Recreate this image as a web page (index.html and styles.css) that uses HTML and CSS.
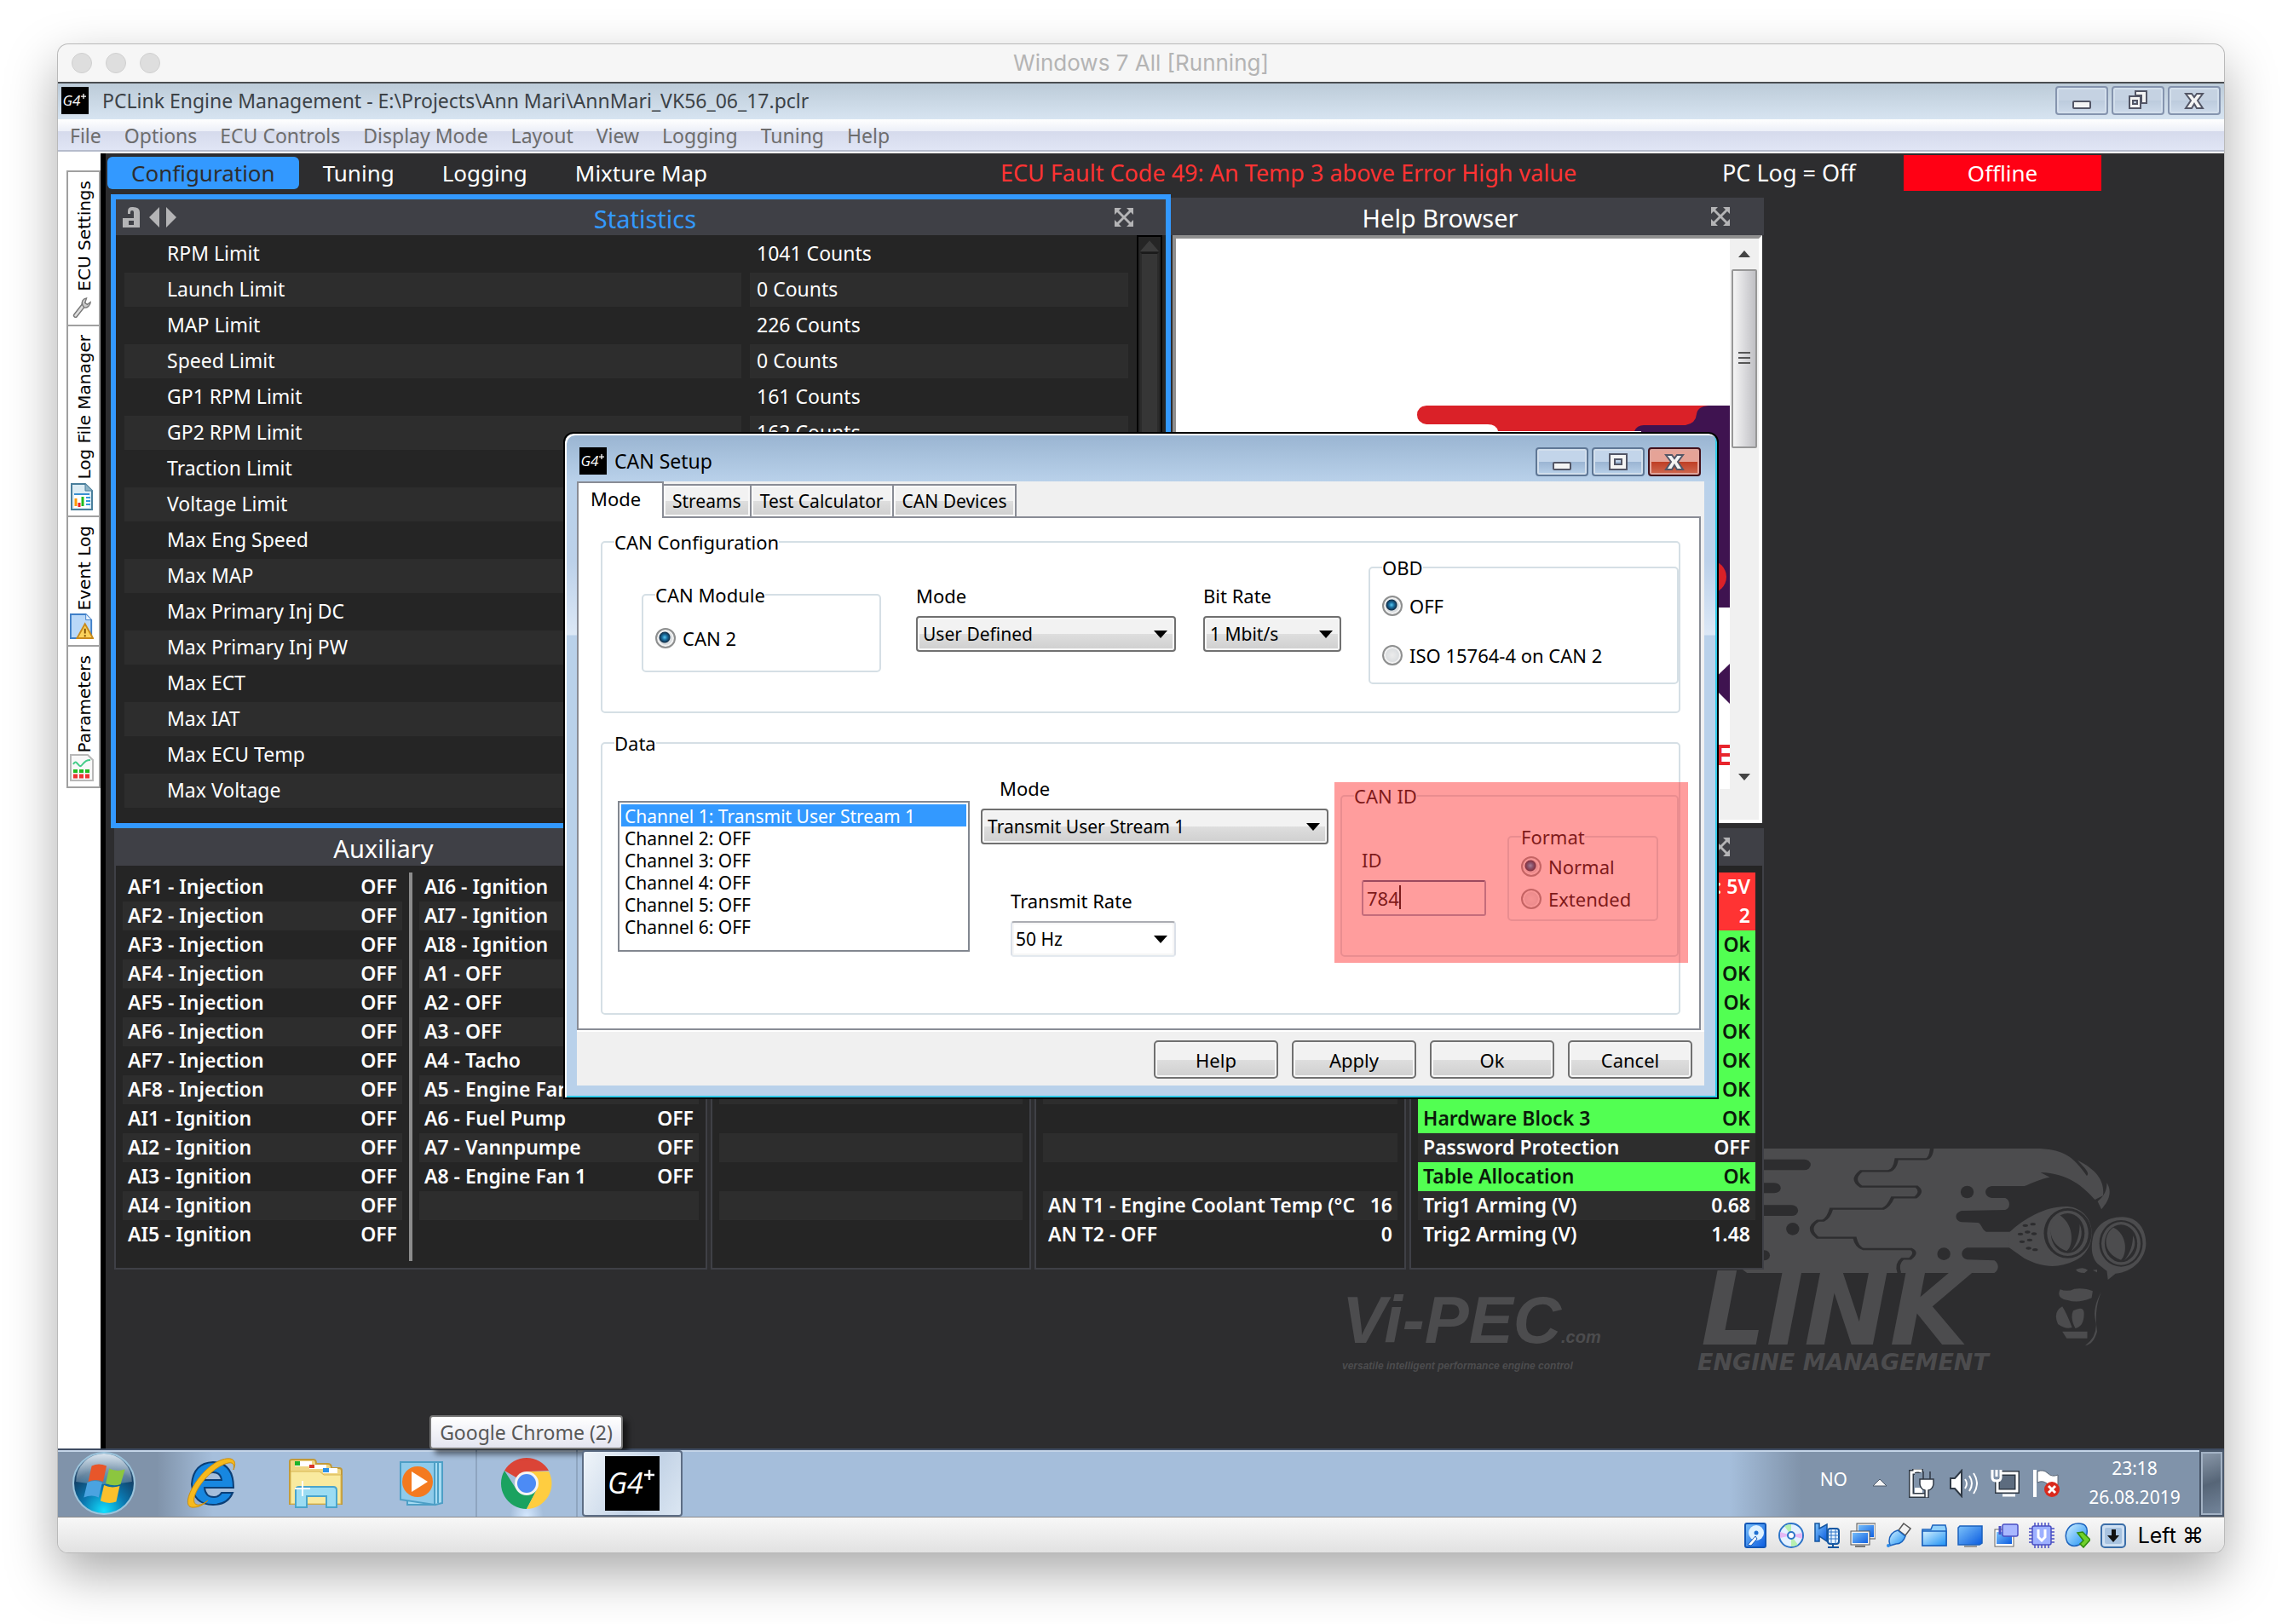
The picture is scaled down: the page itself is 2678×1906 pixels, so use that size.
FILE: index.html
```html
<!DOCTYPE html>
<html lang="en">
<head>
<meta charset="utf-8">
<title>Windows 7 All [Running]</title>
<link rel="stylesheet" href="styles.css">
</head>
<body>
<svg width="0" height="0" class="defs" aria-hidden="true">
  <defs>
    <symbol id="g4" viewBox="0 0 64 64"><rect width="64" height="64" fill="#000"/><text x="3" y="44" font-family="Open Sans, sans-serif" font-style="italic" font-size="34" fill="#fff">G4</text><path d="M52 16v12M46 22h12" stroke="#fff" stroke-width="2.5"/></symbol>
    <symbol id="expand" viewBox="0 0 22 22"><path d="M0 0h8l-3 3 6 6 6-6-3-3h8v8l-3-3-6 6 6 6 3-3v8h-8l3-3-6-6-6 6 3 3H0v-8l3 3 6-6-6-6-3 3z" fill="#b4b4b6"/></symbol>
    <symbol id="w-min" viewBox="0 0 24 24"><rect x="2" y="13" width="20" height="8" rx="1" fill="#f4f4f4" stroke="#535666" stroke-width="2"/></symbol>
    <symbol id="w-max" viewBox="0 0 24 24"><path d="M2 3h20v18H2zM8 9v6h8V9z" fill="#f4f4f4" fill-rule="evenodd" stroke="#535666" stroke-width="2"/></symbol>
    <symbol id="w-restore" viewBox="0 0 24 24"><path d="M9 1h13v14h-6V6H9z" fill="#f4f4f4" stroke="#535666" stroke-width="2"/><path d="M2 7h13v14H2zM6 12v4h5v-4z" fill="#f4f4f4" fill-rule="evenodd" stroke="#535666" stroke-width="2"/></symbol>
    <symbol id="w-close" viewBox="0 0 24 24"><path d="M2 4h7l3 4 3-4h7l-6 8 6 9h-7l-3-5-3 5H2l6-9z" fill="#f4f4f4" stroke="#535666" stroke-width="2"/></symbol>
    <linearGradient id="blue" x1="0" y1="0" x2="1" y2="1"><stop offset="0" stop-color="#d4f1ff"/><stop offset="1" stop-color="#1a8ff4"/></linearGradient>
    <linearGradient id="deep" x1="0" y1="0" x2="1" y2="1"><stop offset="0" stop-color="#7cc2fa"/><stop offset="1" stop-color="#0a5be0"/></linearGradient>
  </defs>
</svg>

<main class="window">
  <header class="mac-bar">
    <span class="dots"><i></i><i></i><i></i></span>
    <h1>Windows 7 All [Running]</h1>
  </header>

  <div class="title-bar">
    <svg class="app-icon"><use href="#g4"/></svg>
    <span class="title-text">PCLink Engine Management - E:\Projects\Ann Mari\AnnMari_VK56_06_17.pclr</span>
    <span class="win-buttons">
      <button type="button" aria-label="Minimize"><svg><use href="#w-min"/></svg></button>
      <button type="button" aria-label="Restore"><svg><use href="#w-restore"/></svg></button>
      <button type="button" aria-label="Close"><svg><use href="#w-close"/></svg></button>
    </span>
  </div>

  <nav class="menu">
    <button type="button">File</button><button type="button">Options</button><button type="button">ECU Controls</button><button type="button">Display Mode</button><button type="button">Layout</button><button type="button">View</button><button type="button">Logging</button><button type="button">Tuning</button><button type="button">Help</button>
  </nav>

  <div class="app">
    <aside class="side">
      <button type="button" class="side-tab t1">
        <span>ECU Settings</span>
        <svg viewBox="0 0 24 26"><path d="M4 23L15 9" stroke="#777" stroke-width="6" stroke-linecap="round"/><path d="M4 23L15 9" stroke="#ddd" stroke-width="3" stroke-linecap="round"/><path d="M13 10c-2-4 0-8 5-9l-2 6 3 2 4-3c0 4-4 8-8 7z" fill="#ccc" stroke="#777" stroke-width="1.5"/></svg>
      </button>
      <button type="button" class="side-tab t2">
        <span>Log File Manager</span>
        <svg viewBox="0 0 26 32"><path d="M1 1h16l8 8v22H1z" fill="#dcecf4" stroke="#4a7f9c" stroke-width="2"/><path d="M17 1v8h8" fill="#8db4c8" stroke="#4a7f9c"/><path d="M4 12h18v17H4z" fill="#fff"/><path d="M4 13h18" stroke="#3a8fd0" stroke-width="2"/><path d="M6 18v9" stroke="#f90" stroke-width="3"/><path d="M10 23v5" stroke="#e22" stroke-width="3"/><path d="M14 16v11" stroke="#2b2" stroke-width="3"/><path d="M18 17h5M18 21h5M18 25h5" stroke="#39d" stroke-width="2"/></svg>
      </button>
      <button type="button" class="side-tab t3">
        <span>Event Log</span>
        <svg viewBox="0 0 30 32"><path d="M1 1h19l7 7v23H1z" fill="#b9d8f8" stroke="#3f7fc8" stroke-width="2"/><path d="M20 1v7h7" fill="#eaf4ff" stroke="#3f7fc8"/><path d="M19 13l10 18H9z" fill="#fbd35c" stroke="#c98a1c" stroke-width="2"/><path d="M19 19v6M19 27v2" stroke="#7a4a00" stroke-width="2"/></svg>
      </button>
      <button type="button" class="side-tab t4">
        <span>Parameters</span>
        <svg viewBox="0 0 28 32"><path d="M1 1h20l6 6v24H1z" fill="#f8f8f8" stroke="#b8b8b8" stroke-width="2"/><path d="M4 12c4-8 6 6 10 1s6-6 10-6" fill="none" stroke="#4c8" stroke-width="2"/><path d="M4 20h5M11 20h5M18 20h5" stroke="#2b2" stroke-width="4"/><path d="M4 26h5M11 26h5M18 26h5" stroke="#e33" stroke-width="5"/></svg>
      </button>
    </aside>

    <section class="workspace">
      <div class="top-row">
        <div class="tabs">
          <button type="button" class="on">Configuration</button><button type="button">Tuning</button><button type="button">Logging</button><button type="button">Mixture Map</button>
        </div>
        <span class="fault">ECU Fault Code 49: An Temp 3 above Error High value</span>
        <span class="pclog">PC Log = Off</span>
        <strong class="offline">Offline</strong>
      </div>

      <svg class="brand" viewBox="0 0 952 274" aria-hidden="true">
        <g fill="#4c4c4e" transform="translate(-30 -26) scale(.6378 .3333)">
          <path d="M785 84H1330C1380 84 1400 110 1425 180C1432 170 1420 150 1408 125C1445 160 1458 200 1455 250L1440 264C1420 220 1390 170 1340 168L1357 185C1340 190 1320 210 1310 216H1250C1235 222 1235 252 1250 258H1275C1285 265 1285 295 1275 300L1195 303C1180 310 1182 340 1195 343L1225 345C1232 350 1232 370 1240 377H1290V433H1205C1192 440 1192 470 1205 475L1255 478C1264 490 1264 510 1255 522H800L787 503Z"/>
          <path d="M1462 205C1470 230 1470 260 1452 298L1445 270C1458 250 1462 230 1462 205Z"/>
          <g fill="#2d2d2f">
            <rect x="800" y="122" width="117" height="38" rx="12" ry="19"/><rect x="800" y="205" width="62" height="36" rx="12" ry="18"/><rect x="800" y="283" width="94" height="38" rx="12" ry="19"/>
            <ellipse cx="1205" cy="237" rx="12" ry="22"/><ellipse cx="884" cy="367" rx="12" ry="22"/><ellipse cx="1162" cy="455" rx="12" ry="22"/><ellipse cx="832" cy="460" rx="10" ry="18"/>
          </g>
          <path d="M1140 84Q1138 121 1128 121H1075Q1072 160 1060 163H1010Q990 193 1010 218H1112Q1124 236 1110 256H1068Q1060 290 1050 296H955Q950 330 940 338H930Q908 365 930 398H998Q1002 432 1014 438H1102Q1114 450 1100 472H1086Q1074 490 1080 522" fill="none" stroke="#2d2d2f" stroke-width="7"/>
          <path d="M1283 378C1310 330 1350 285 1390 288C1445 298 1448 440 1404 478C1370 510 1340 500 1310 470L1280 430Z"/>
          <ellipse cx="1390" cy="382" rx="44" ry="88" fill="#2d2d2f"/><ellipse cx="1390" cy="382" rx="38" ry="80"/><ellipse cx="1390" cy="382" rx="31" ry="70" fill="#2d2d2f"/>
          <path d="M1372 315C1402 345 1402 425 1388 445C1352 420 1352 345 1372 315ZM1412 350C1420 385 1414 420 1396 446C1408 415 1412 385 1412 350Z"/>
          <path d="M1436 400C1440 360 1460 325 1490 325C1520 325 1534 370 1534 418C1534 470 1510 520 1478 524L1464 546L1462 515L1445 490Q1430 460 1436 400Z"/>
          <ellipse cx="1488" cy="418" rx="40" ry="82" fill="#2d2d2f"/><ellipse cx="1488" cy="418" rx="36" ry="76"/><ellipse cx="1488" cy="418" rx="30" ry="66" fill="#2d2d2f"/>
          <path d="M1474 362C1500 385 1500 455 1488 476C1452 450 1456 385 1474 362ZM1510 390C1518 420 1512 450 1494 478C1506 450 1510 420 1510 390Z"/>
          <g fill="#2d2d2f"><circle cx="1312" cy="355" r="5"/><circle cx="1326" cy="350" r="5"/><circle cx="1303" cy="385" r="5"/><circle cx="1316" cy="378" r="5"/><circle cx="1328" cy="384" r="5"/><circle cx="1306" cy="412" r="5"/><circle cx="1320" cy="406" r="5"/><circle cx="1318" cy="435" r="5"/><circle cx="1330" cy="440" r="5"/></g>
          <path d="M1405 510q14-12 22 2l-6 10q-14 0-16-12zM1436 512l8-2v10zM1376 580q14 10 26-2q20-4 34 8l-2 24q-24 20-44 8q-22-6-14-38zM1380 640q-18 20-8 62q14 20 26 12q-10-50-18-74zM1400 655q20-20 20 10q0 45-16 52q-10-36-4-62zM1380 728h46v24h-38zM1452 588q-18 60-10 110q2 50-20 80q16-6 22-50q-6-80 8-140z"/>
        </g>
        <g class="brand-text">
          <text x="5" y="230" class="vipec">Vi-PEC</text>
          <text x="262" y="230" class="dotcom">.com</text>
          <text x="5" y="261" class="tagline">versatile intelligent performance engine control</text>
          <text x="426" y="232" class="link">LINK</text>
          <text x="422" y="262" class="engine">ENGINE MANAGEMENT</text>
        </g>
      </svg>

      <div class="dash">
        <div class="row-top">
          <section class="panel stats">
            <header class="phead">
              <span class="ptools">
                <svg width="24" height="24" viewBox="0 0 24 24"><path d="M0 13h13V6q0-2-2-2t-2 2v2H6V5q0-5 5-5h1q8 0 8 6v18H0zM7 16v5h6v-5z" fill="#b4b4b6" fill-rule="evenodd"/></svg>
                <svg width="34" height="24" viewBox="0 0 34 24"><path d="M13 0v24L1 12zM21 0v24l12-12z" fill="#b4b4b6"/></svg>
              </span>
              <h2>Statistics</h2>
              <svg class="exp"><use href="#expand"/></svg>
            </header>
            <div class="stats-body">
              <table>
                <tr><th>RPM Limit</th><td>1041 Counts</td></tr>
                <tr><th>Launch Limit</th><td>0 Counts</td></tr>
                <tr><th>MAP Limit</th><td>226 Counts</td></tr>
                <tr><th>Speed Limit</th><td>0 Counts</td></tr>
                <tr><th>GP1 RPM Limit</th><td>161 Counts</td></tr>
                <tr><th>GP2 RPM Limit</th><td>162 Counts</td></tr>
                <tr><th>Traction Limit</th><td></td></tr>
                <tr><th>Voltage Limit</th><td></td></tr>
                <tr><th>Max Eng Speed</th><td></td></tr>
                <tr><th>Max MAP</th><td></td></tr>
                <tr><th>Max Primary Inj DC</th><td></td></tr>
                <tr><th>Max Primary Inj PW</th><td></td></tr>
                <tr><th>Max ECT</th><td></td></tr>
                <tr><th>Max IAT</th><td></td></tr>
                <tr><th>Max ECU Temp</th><td></td></tr>
                <tr><th>Max Voltage</th><td></td></tr>
              </table>
              <div class="dark-scroll"><i></i><b></b></div>
            </div>
          </section>

          <section class="panel help">
            <header class="phead"><h2>Help Browser</h2><svg class="exp"><use href="#expand"/></svg></header>
            <div class="help-body">
              <div class="help-page">
                <svg viewBox="0 0 650 648" preserveAspectRatio="xMaxYMin slice">
                  <path d="M294 196H650V433H600V226H378Q376 218 366 218H294Q283 216 283 207Q283 197 294 196Z" fill="#da2128"/>
                  <path d="M625 196H650V433H546V226H538Q541 219 549 219H598Q610 217 611 206Q612 197 625 196Z" fill="#3f1350"/>
                  <circle cx="627" cy="397" r="19" fill="#da2128"/>
                  <path d="M650 499V546L626 522Z" fill="#3f1350"/>
                  <text x="633" y="618" font-family="Liberation Sans, sans-serif" font-weight="bold" font-size="35" fill="#e8252c">E</text>
                </svg>
              </div>
              <div class="vscroll"><i class="up"></i><b></b><i class="down"></i></div>
              <div class="hscroll"></div>
            </div>
          </section>
        </div>

        <div class="row-bottom">
          <section class="panel aux">
            <header class="phead"><h2>Auxiliary</h2></header>
            <div class="pbody two">
              <table>
                <tr><th>AF1 - Injection</th><td>OFF</td></tr>
                <tr><th>AF2 - Injection</th><td>OFF</td></tr>
                <tr><th>AF3 - Injection</th><td>OFF</td></tr>
                <tr><th>AF4 - Injection</th><td>OFF</td></tr>
                <tr><th>AF5 - Injection</th><td>OFF</td></tr>
                <tr><th>AF6 - Injection</th><td>OFF</td></tr>
                <tr><th>AF7 - Injection</th><td>OFF</td></tr>
                <tr><th>AF8 - Injection</th><td>OFF</td></tr>
                <tr><th>AI1 - Ignition</th><td>OFF</td></tr>
                <tr><th>AI2 - Ignition</th><td>OFF</td></tr>
                <tr><th>AI3 - Ignition</th><td>OFF</td></tr>
                <tr><th>AI4 - Ignition</th><td>OFF</td></tr>
                <tr><th>AI5 - Ignition</th><td>OFF</td></tr>
              </table>
              <i class="divider"></i>
              <table>
                <tr><th>AI6 - Ignition</th><td></td></tr>
                <tr><th>AI7 - Ignition</th><td></td></tr>
                <tr><th>AI8 - Ignition</th><td></td></tr>
                <tr><th>A1 - OFF</th><td></td></tr>
                <tr><th>A2 - OFF</th><td></td></tr>
                <tr><th>A3 - OFF</th><td></td></tr>
                <tr><th>A4 - Tacho</th><td></td></tr>
                <tr><th>A5 - Engine Fan</th><td></td></tr>
                <tr><th>A6 - Fuel Pump</th><td>OFF</td></tr>
                <tr><th>A7 - Vannpumpe</th><td>OFF</td></tr>
                <tr><th>A8 - Engine Fan 1</th><td>OFF</td></tr>
                <tr><th></th><td></td></tr>
                <tr><th></th><td></td></tr>
              </table>
            </div>
          </section>

          <section class="panel">
            <header class="phead"></header>
            <div class="pbody">
              <table>
                <tr><th></th></tr><tr><th></th></tr><tr><th></th></tr><tr><th></th></tr><tr><th></th></tr><tr><th></th></tr><tr><th></th></tr>
                <tr><th></th></tr>
                <tr><th></th></tr><tr><th></th></tr><tr><th></th></tr><tr><th></th></tr><tr><th></th></tr>
              </table>
            </div>
          </section>

          <section class="panel">
            <header class="phead"></header>
            <div class="pbody">
              <table>
                <tr><th></th><td></td></tr><tr><th></th><td></td></tr><tr><th></th><td></td></tr><tr><th></th><td></td></tr><tr><th></th><td></td></tr><tr><th></th><td></td></tr><tr><th></th><td></td></tr><tr><th></th><td></td></tr><tr><th></th><td></td></tr><tr><th></th><td></td></tr><tr><th></th><td></td></tr>
                <tr><th>AN T1 - Engine Coolant Temp (°C</th><td>16</td></tr>
                <tr><th>AN T2 - OFF</th><td>0</td></tr>
              </table>
            </div>
          </section>

          <section class="panel">
            <header class="phead"><svg class="exp"><use href="#expand"/></svg></header>
            <div class="pbody">
              <table>
                <tr class="bad"><th></th><td>: 5V</td></tr>
                <tr class="bad"><th></th><td>2</td></tr>
                <tr class="good"><th></th><td>Ok</td></tr>
                <tr class="good"><th></th><td>OK</td></tr>
                <tr class="good"><th></th><td>Ok</td></tr>
                <tr class="good"><th></th><td>OK</td></tr>
                <tr class="good"><th></th><td>OK</td></tr>
                <tr class="good"><th></th><td>OK</td></tr>
                <tr class="good"><th>Hardware Block 3</th><td>OK</td></tr>
                <tr><th>Password Protection</th><td>OFF</td></tr>
                <tr class="good"><th>Table Allocation</th><td>Ok</td></tr>
                <tr><th>Trig1 Arming (V)</th><td>0.68</td></tr>
                <tr><th>Trig2 Arming (V)</th><td>1.48</td></tr>
              </table>
            </div>
          </section>
        </div>
      </div>
    </section>
  </div>

  <section class="dialog" role="dialog" aria-label="CAN Setup">
    <div class="dlg-title">
      <svg class="app-icon"><use href="#g4"/></svg>
      <span>CAN Setup</span>
      <span class="win-buttons">
        <button type="button" aria-label="Minimize"><svg><use href="#w-min"/></svg></button>
        <button type="button" aria-label="Maximize"><svg><use href="#w-max"/></svg></button>
        <button type="button" class="red" aria-label="Close"><svg><use href="#w-close"/></svg></button>
      </span>
    </div>
    <form class="client">
      <div class="dlg-tabs">
        <button type="button" class="on">Mode</button><button type="button">Streams</button><button type="button">Test Calculator</button><button type="button">CAN Devices</button>
      </div>
      <div class="page">
        <fieldset class="config">
          <legend>CAN Configuration</legend>
          <div class="config-row">
            <fieldset class="module">
              <legend>CAN Module</legend>
              <label class="opt"><input type="radio" name="module" checked>CAN 2</label>
            </fieldset>
            <div class="field mode">
              <label for="mode">Mode</label>
              <span class="combo"><select id="mode"><option>User Defined</option></select></span>
            </div>
            <div class="field rate">
              <label for="bit">Bit Rate</label>
              <span class="combo"><select id="bit"><option>1 Mbit/s</option></select></span>
            </div>
            <fieldset class="obd">
              <legend>OBD</legend>
              <label class="opt"><input type="radio" name="obd" checked>OFF</label>
              <label class="opt"><input type="radio" name="obd">ISO 15764-4 on CAN 2</label>
            </fieldset>
          </div>
        </fieldset>

        <fieldset class="data">
          <legend>Data</legend>
          <div class="data-row">
            <select class="channels" size="6" aria-label="Channels">
              <option selected>Channel 1: Transmit User Stream 1</option>
              <option>Channel 2: OFF</option>
              <option>Channel 3: OFF</option>
              <option>Channel 4: OFF</option>
              <option>Channel 5: OFF</option>
              <option>Channel 6: OFF</option>
            </select>
            <div class="transmit">
              <div class="field">
                <label for="cmode" class="in-22">Mode</label>
                <span class="combo"><select id="cmode"><option>Transmit User Stream 1</option></select></span>
              </div>
              <div class="field tx">
                <label for="tx">Transmit Rate</label>
                <span class="combo plain"><select id="tx"><option>50 Hz</option></select></span>
              </div>
            </div>
            <div class="canid-wrap">
              <fieldset class="canid">
                <legend>CAN ID</legend>
                <div class="canid-row">
                  <div class="field id">
                    <label for="cid">ID</label>
                    <span class="text"><input id="cid" type="text" value="784"></span>
                  </div>
                  <fieldset class="format">
                    <legend>Format</legend>
                    <label class="opt"><input type="radio" name="fmt" checked>Normal</label>
                    <label class="opt"><input type="radio" name="fmt">Extended</label>
                  </fieldset>
                </div>
              </fieldset>
            </div>
          </div>
        </fieldset>
      </div>
      <footer class="dlg-foot">
        <button type="button">Help</button><button type="button">Apply</button><button type="button">Ok</button><button type="button">Cancel</button>
      </footer>
    </form>
  </section>

  <footer class="taskbar">
    <button type="button" class="orb" aria-label="Start">
      <svg viewBox="0 0 72 72">
        <defs><radialGradient id="orb" cx=".5" cy=".95" r=".9"><stop offset="0" stop-color="#12e0ff"/><stop offset=".4" stop-color="#0a78b0"/><stop offset=".75" stop-color="#123f66"/><stop offset="1" stop-color="#5f7f9c"/></radialGradient><linearGradient id="gl" x1="0" y1="0" x2="0" y2="1"><stop offset="0" stop-color="#dfe9f2" stop-opacity=".95"/><stop offset="1" stop-color="#9fb6c8" stop-opacity=".35"/></linearGradient></defs>
        <circle cx="36" cy="36" r="35" fill="url(#orb)" stroke="#9cc4dc" stroke-width="2"/>
        <path d="M4 34A32 32 0 0 1 68 34Q36 40 4 34Z" fill="url(#gl)"/>
        <path d="M22 16q8-4 17 0l-4 18q-8-4-17 0z" fill="#e8562a"/><path d="M42 19q8 4 18 1l-5 17q-8 3-17-1z" fill="#8cc63f"/><path d="M17 35q8-4 17 0l-4 17q-8-4-17 0z" fill="#4aa3e0"/><path d="M36 38q8 4 18 1l-4 18q-9 3-18-1z" fill="#fbc02d"/>
      </svg>
    </button>
    <button type="button" class="task" aria-label="Internet Explorer">
      <svg width="66" height="62" viewBox="0 0 66 62"><path d="M61 36H27q1 11 11 11 6 0 9-5h13q-6 14-23 14Q14 56 12 32 14 7 37 6q24 1 24 30zM27 27h20q-1-9-10-9t-10 9z" fill="#1787e0" stroke="#0b3f77" stroke-width="2"/><path d="M15 59C-6 62 20 12 48 3c14-4 17 3 13 12 2-9-3-10-12-6C28 18 6 52 18 56c4 1 9-2 13-5-5 5-11 8-16 8z" fill="#f6b91c" stroke="#c98d10"/></svg>
    </button>
    <button type="button" class="task" aria-label="Windows Explorer">
      <svg width="66" height="60" viewBox="0 0 66 60"><path d="M3 54V4q0-2 3-2h25q3 0 3 5h14q4 0 4 5h9q3 0 3 3v39z" fill="#efd684" stroke="#c29a38" stroke-width="2"/><path d="M9 4h20v6H9z" fill="#fff"/><path d="M9 4h6v5H9z" fill="#1db32a"/><path d="M26 8h20v5H26z" fill="#fff"/><path d="M26 8h6v4h-6z" fill="#d8362a"/><path d="M42 12h17v6H42z" fill="#fff"/><path d="M42 12h7v5h-7z" fill="#2b92e8"/><path d="M4 16h34l5 4h20v34H4z" fill="#f9ea9f" stroke="#d8b653"/><path d="M10 58V38q0-4 4-4h40q4 0 4 4v20H46V45H23v13z" fill="#9bdcf3" stroke="#4aa5cc" stroke-width="2"/><path d="M18 27v18M9 36h18" stroke="#fff" stroke-width="2"/></svg>
    </button>
    <button type="button" class="task" aria-label="Media Player">
      <svg width="60" height="54" viewBox="0 0 60 54"><path d="M14 2h41v48l-8 2H14z" fill="#a7dcf3" stroke="#4d9fc6" stroke-width="2"/><path d="M6 2h40v50L6 46z" fill="#8fcbea" stroke="#4d9fc6" stroke-width="2"/><path d="M50 3v47" stroke="#4d9fc6" stroke-width="2"/><circle cx="26" cy="25" r="18" fill="#f47a1f"/><path d="M19 13v24l19-12z" fill="#fff"/></svg>
    </button>
    <button type="button" class="task chrome" aria-label="Google Chrome">
      <svg width="62" height="62" viewBox="0 0 62 62"><path d="M31 31L5 16A30 30 0 0 1 57 16L31 17z" fill="#db4437"/><path d="M31 31L43 38 31 61A30 30 0 0 1 5 16L19 38z" fill="#1aa260"/><path d="M31 17H57A30 30 0 0 1 31 61L43 38z" fill="#ffcd40"/><circle cx="31" cy="31" r="14" fill="#f4f4f4"/><circle cx="31" cy="31" r="11" fill="#4c8bf5"/></svg>
      <span class="tip">Google Chrome (2)</span>
    </button>
    <button type="button" class="task active" aria-label="PCLink"><svg width="64" height="64"><use href="#g4"/></svg></button>

    <div class="tray">
      <span class="lang">NO</span>
      <svg class="caret" width="18" height="12" viewBox="0 0 18 12"><path d="M9 1l8 8H1z" fill="#f6f6f6" stroke="#4d5a6b"/></svg>
      <svg width="32" height="34" viewBox="0 0 32 34"><path d="M7 4H3v27h18M7 4V2h7v2" fill="none" stroke="#2f3945" stroke-width="6"/><path d="M7 4H3v27h18M7 4V2h7v2" fill="none" stroke="#fff" stroke-width="3"/><path d="M7 22h9v6H7z" fill="#fff"/><path d="M17 3v9M25 3v9M13 12h16v6q-1 6-6 7v9h-4v-9q-5-1-6-7z" fill="#fff" stroke="#2f3945" stroke-width="1.5"/></svg>
      <svg width="34" height="34" viewBox="0 0 34 34"><path d="M2 11h5l8-9v30l-8-9H2z" fill="#fff" stroke="#2f3945" stroke-width="2"/><path d="M19 12q4 5 0 11M24 8q6 9 0 18M29 5q8 12 0 24" fill="none" stroke="#fff" stroke-width="2"/></svg>
      <svg width="34" height="34" viewBox="0 0 34 34"><path d="M12 5h19v21H8V15" fill="#5d6c7f" stroke="#2f3945" stroke-width="6"/><path d="M12 5h19v21H8V15M14 31h15" fill="none" stroke="#fff" stroke-width="3"/><path d="M2 1v9q0 4 5 4t5-4V1M7 1v8" fill="none" stroke="#fff" stroke-width="3"/></svg>
      <svg width="34" height="34" viewBox="0 0 34 34"><path d="M3 1v32" stroke="#fff" stroke-width="4"/><path d="M6 3q7-3 12 2t12 2v12q-8 2-13-2t-11-1z" fill="#fff" stroke="#5a6675"/><circle cx="23" cy="24" r="9" fill="#d9291c"/><path d="M19 20l8 8M27 20l-8 8" stroke="#fff" stroke-width="3"/></svg>
      <time class="clock"><span>23:18</span><span>26.08.2019</span></time>
      <button type="button" class="desk" aria-label="Show desktop"></button>
    </div>
  </footer>

  <footer class="status">
    <svg viewBox="0 0 30 30"><rect x="3" y="1" width="24" height="28" rx="2" fill="url(#deep)" stroke="#1257b8" stroke-width="2"/><circle cx="16" cy="12" r="9" fill="#dff1ff"/><circle cx="16" cy="12" r="2.500" fill="#1f6fd0"/><path d="M6 26l9-10 2 3-7 8z" fill="#fff" stroke="#1257b8"/></svg>
    <svg viewBox="0 0 30 30"><circle cx="15" cy="15" r="14" fill="#e4f1ff" stroke="#2d74c8" stroke-width="2"/><path d="M15 15L7 4a14 14 0 0 1 8-2zM15 15l8 11a14 14 0 0 1-8 2z" fill="#b7f0b0"/><path d="M15 15L28 12v7zM15 15L2 18v-7z" fill="#e6b8f4"/><circle cx="15" cy="15" r="4" fill="#fff" stroke="#2d74c8" stroke-width="2"/></svg>
    <svg viewBox="0 0 30 30"><path d="M1 1h5v6l9-5v20L6 16v6H1z" fill="url(#deep)" stroke="#14559f" stroke-width="1.500"/><rect x="16" y="7" width="13" height="18" rx="3" fill="#e9f4ff" stroke="#14559f" stroke-width="2"/><path d="M16 11h13M16 15h13M16 19h13M20 7v18M25 7v18" stroke="#2d74c8"/><path d="M22 25v4M16 29h13" stroke="#14559f" stroke-width="2"/></svg>
    <svg viewBox="0 0 30 30"><rect x="9" y="2" width="20" height="16" fill="url(#deep)" stroke="#e8e8e8" stroke-width="2"/><rect x="8" y="1" width="22" height="18" fill="none" stroke="#555"/><rect x="2" y="11" width="20" height="14" fill="url(#deep)" stroke="#f4f4f4" stroke-width="2"/><rect x="1" y="10" width="22" height="16" fill="none" stroke="#555"/><path d="M6 28h12" stroke="#777" stroke-width="2"/></svg>
    <svg viewBox="0 0 30 30"><path d="M21 1l8 6-6 8-8-6z" fill="#f2f2f2" stroke="#555" stroke-width="1.500"/><path d="M14 9l9 7q-3 9-11 9l-7 2-1-5q0-10 10-13z" fill="url(#blue)" stroke="#1b62bd" stroke-width="1.500"/><circle cx="3" cy="27" r="2" fill="#2d8be8"/></svg>
    <svg viewBox="0 0 30 30"><path d="M1 27V8h10l2-5h15l1 4v20z" fill="#8fd0fb" stroke="#1b62bd" stroke-width="1.500"/><path d="M1 10h28v17H1z" fill="url(#blue)" stroke="#1b62bd" stroke-width="1.500"/></svg>
    <svg viewBox="0 0 30 30"><path d="M3 4h26v20l-3 2H1V6z" fill="url(#deep)" stroke="#1b62bd" stroke-width="1.500"/><path d="M8 28h15" stroke="#999" stroke-width="2"/></svg>
    <svg viewBox="0 0 30 30"><rect x="2" y="8" width="22" height="20" fill="#fff" stroke="#666"/><rect x="4" y="11" width="18" height="14" fill="url(#deep)"/><rect x="11" y="2" width="18" height="14" rx="2" fill="#a9b8ff" stroke="#4a4fc4" stroke-width="1.500"/><path d="M8 4v10" stroke="#4a4fc4" stroke-width="3"/></svg>
    <svg viewBox="0 0 30 30"><path d="M7 0v30M11 0v30M15 0v30M19 0v30M23 0v30M0 7h30M0 11h30M0 15h30M0 19h30M0 23h30" stroke="#4a4fc4" stroke-width="1.500"/><rect x="4" y="4" width="22" height="22" rx="2" fill="#9db0ff" stroke="#4a4fc4" stroke-width="1.500"/><path d="M11 8v9l4 4 4-4V8" fill="none" stroke="#fff" stroke-width="3"/></svg>
    <svg viewBox="0 0 30 30"><path d="M16 1q12 0 10 12-1 9-9 13-9 4-14-3Q-1 14 4 7q4-6 12-6z" fill="url(#blue)" stroke="#1b62bd" stroke-width="1.500"/><path d="M15 12l6-1 9 9-8 9-4-4 4-4z" fill="#6fd12b" stroke="#2f8a10" stroke-width="1.500"/></svg>
    <svg viewBox="0 0 30 30"><rect x="1" y="2" width="28" height="27" rx="4" fill="#cfe0f2" stroke="#3b6ea8" stroke-width="2"/><rect x="5" y="6" width="20" height="19" rx="2" fill="#a8c3e0"/><path d="M13 8h5v7h4l-7 8-7-8h5z" fill="#111"/></svg>
    <span>Left ⌘</span>
  </footer>
</main>
</body>
</html>
```
FILE: styles.css
```css
* { box-sizing: border-box; }

body {
  margin: 0;
  min-height: 100vh;
  padding: 52px 68px 84px;
  display: flex;
  background: #fff;
  font-family: "Noto Sans", "Open Sans", sans-serif;
  font-size: 23px;
  line-height: 28px;
  color: #000;
}

button, input, select { font: inherit; color: inherit; margin: 0; }
button { padding: 0; border: 0; background: none; }
h1, h2 { margin: 0; font-weight: 400; }
i, b { display: block; }
svg { display: block; flex: none; }
.defs { position: absolute; }

.window {
  position: relative;
  flex: 1;
  min-width: 0;
  display: flex;
  flex-direction: column;
  border-radius: 12px;
  background: #f6f6f6;
  box-shadow: 0 0 0 1px #b9b9b9, 0 24px 60px rgba(0, 0, 0, .34);
}

/* host window bar */
.mac-bar {
  position: relative;
  height: 46px;
  display: flex;
  align-items: center;
  justify-content: center;
  border-bottom: 2px solid #4a4d50;
}
.mac-bar h1 { font-family: Inter, sans-serif; font-size: 26px; color: #b4b4b4; }
.dots { position: absolute; left: 16px; display: flex; gap: 16px; }
.dots i { width: 24px; height: 24px; border-radius: 50%; background: #dedede; border: 1px solid #d0d0d0; }

/* application title and menu */
.title-bar {
  height: 42px;
  display: flex;
  align-items: center;
  padding: 0 4px 2px;
  background: linear-gradient(#bccbd8, #d7e4f1);
  color: #3c4247;
}
.app-icon { width: 32px; height: 32px; }
.title-text { margin-left: 16px; }
.win-buttons { margin-left: auto; display: flex; gap: 4px; }
.win-buttons button {
  width: 62px;
  height: 34px;
  display: grid;
  place-items: center;
  border: 2px solid #8594ae;
  border-radius: 4px;
  box-shadow: inset 0 0 0 2px #d3dfec;
  background: linear-gradient(#c5d2e2 50%, #bccbdd 50%, #cddaea);
}
.win-buttons svg { width: 24px; height: 24px; }

.menu {
  height: 40px;
  display: flex;
  gap: 27px;
  padding: 0 14px 2px;
  color: #6d6d6d;
  background: linear-gradient(#fff 0, #eceff8 14px, #d5daec 14px, #e0e5f5 36px, #b6bccc 36px, #b6bccc 38px, #fff 38px);
}

/* application body */
.app { flex: 1; display: flex; }
.side {
  flex: none;
  width: 56px;
  padding: 20px 0 0 10px;
  background: #fff;
  border-right: 6px solid #000;
}
.side-tab {
  width: 40px;
  display: flex;
  flex-direction: column;
  align-items: center;
  justify-content: space-between;
  padding: 10px 0 8px;
  border: 2px solid #a0a0a0;
  border-bottom: 0;
  background: #fff;
  font-family: "DejaVu Sans", sans-serif;
  font-size: 20px;
  line-height: 24px;
}
.side-tab span { writing-mode: vertical-rl; transform: rotate(180deg); white-space: nowrap; margin-left: 2px; }
.side-tab svg { width: 28px; height: 32px; margin-right: 4px; }
.t1 { height: 181px; }
.t2 { height: 224px; }
.t3 { height: 152px; }
.t4 { height: 168px; border-bottom: 2px solid #a0a0a0; }
.side .t1 svg { height: 24px; }
.t2, .t3, .t4 { padding-bottom: 6px; }

.workspace {
  position: relative;
  flex: 1;
  min-width: 0;
  background: #2d2d2f;
  color: #fff;
}
.top-row {
  height: 48px;
  padding-left: 2px;
  display: grid;
  grid-template-columns: 1048fr 847fr 213fr 232fr 144fr;
  align-items: start;
  font-size: 26px;
  line-height: 38px;
  white-space: nowrap;
}
.top-row > * { margin-top: 4px; }
.tabs { display: flex; }
.tabs button { height: 38px; padding: 0 28px; border-radius: 6px; }
.tabs .on { background: #39f; color: #2d2d2f; }
.fault { color: #f33; }
.fault, .pclog { font-size: 27px; }
.top-row .offline { margin-top: 2px; line-height: 42px; background: #ff0014; text-align: center; font-weight: 400; }

.brand { position: absolute; right: 88px; bottom: 80px; width: 952px; height: 274px; }
.brand-text { fill: #4c4c4e; }
.vipec { font: italic bold 78px "Liberation Sans", sans-serif; }
.dotcom { font: italic bold 20px "Liberation Sans", sans-serif; }
.tagline { font: italic bold 12px "Liberation Sans", sans-serif; }
.link { font: italic bold 120px "DejaVu Sans", sans-serif; }
.engine { font: italic bold 27px "DejaVu Sans", sans-serif; }

.dash { position: relative; width: 79%; max-width: 1940px; margin-left: 6px; }
.row-top { display: grid; grid-template-columns: 1244fr 696fr; align-items: stretch; }
.phead {
  position: relative;
  height: 42px;
  display: flex;
  align-items: center;
  justify-content: center;
  background: #3f4046;
}
.phead h2 { font-size: 29px; line-height: 40px; padding-top: 4px; }
.exp { position: absolute; right: 38px; width: 22px; height: 22px; }
.help .exp { right: 40px; }
.stats { border: 6px solid #39f; height: 744px; background: #252525; }
.stats h2 { color: #39f; margin-left: 10px; }
.ptools { position: absolute; left: 8px; display: flex; gap: 6px; }
.stats-body { display: flex; height: 690px; }
.stats table { flex: 1; height: 674px; border-spacing: 10px 2px; table-layout: fixed; }
.stats th, .stats td { height: 40px; padding: 0 0 3px 8px; text-align: left; font-weight: 400; line-height: 28px; }
.stats th { width: 724px; padding-left: 50px; }
.stats tr:nth-child(even) > * { background: #2d2d2d; }
.dark-scroll { width: 30px; margin-right: 4px; border: 2px solid #000; background: #252525; }
.dark-scroll i { height: 16px; margin: 1px 2px; background: #3c3c3c; clip-path: polygon(50% 20%, 100% 100%, 0 100%); }
.dark-scroll b { height: 660px; margin: 0 2px; background: #363636; border: 2px solid #2b2b2b; border-top-color: #1a1a1a; }

.help { margin: 4px 0 6px; }
.help .phead { height: 44px; }
.help h2 { margin-right: 64px; }
.help-body {
  height: 690px;
  margin: 0 2px;
  display: grid;
  grid-template: 1fr 36px / 1fr 34px;
  border: 4px solid #fff;
  border-color: #8e8e8e #fff #fff #8e8e8e;
  background: #f0f0f0;
}
.help-page { overflow: hidden; background: #fff; }
.help-page svg { width: 100%; height: 648px; }
.vscroll { display: flex; flex-direction: column; align-items: center; background: #f0f0f0; }
.vscroll b { width: 30px; height: 210px; margin: 14px 0 auto; border: 2px solid #979797; border-radius: 2px; display: grid; background: repeating-linear-gradient(#555 0 2px, transparent 2px 6px) center / 14px 16px no-repeat, linear-gradient(90deg, #f5f5f5, #d5d5d8 60%, #c0c0c4); }
.vscroll i { width: 14px; height: 8px; background: #444; margin-top: 14px; clip-path: polygon(50% 0, 100% 100%, 0 100%); }
.vscroll .down { margin: 0 0 10px; clip-path: polygon(0 0, 100% 0, 50% 100%); }

.row-bottom { margin-left: 4px; display: grid; grid-template-columns: 696fr 376fr 436fr 416fr; gap: 4px; }
.row-bottom .panel { border: 2px solid #3f4046; border-top: 0; background: #252525; min-width: 0; }
.row-bottom .phead { height: 44px; }
.aux h2 { margin-right: 64px; }
.pbody { padding: 8px; min-height: 470px; }
.two { display: grid; grid-template-columns: 1fr 4px 1fr; gap: 8px; align-items: start; }
.divider { height: 456px; background: #8c8c8c; }
.pbody table { width: 100%; border-collapse: collapse; font-weight: 600; white-space: nowrap; }
.pbody tr { height: 34px; }
.pbody tr:nth-child(even) { background: #2d2d2d; }
.pbody th, .pbody td { padding: 0 6px 3px; text-align: left; font-weight: 600; line-height: 28px; }
.pbody td { padding-left: 0; text-align: right; }
.pbody tr.good { background: #52ff52; color: #0b1a0b; }
.pbody tr.bad { background: #f33; }

/* CAN Setup window floats over the workspace */
.dialog {
  position: absolute;
  left: 593px;
  top: 455px;
  width: 1356px;
  border: 2px solid #000;
  border-radius: 12px 12px 0 0;
  padding: 0 15px 14px 14px;
  font-size: 22px;
  background: linear-gradient(#99b4d1, #b9d1ea 56px, #bcd1ea 150px, #dce8f6 236px, #b9d1ea 237px);
  box-shadow: inset 2px 2px 0 #fff, inset -2px -2px 0 #30c9e8;
}
.dlg-title { height: 56px; display: flex; align-items: flex-start; padding: 16px 4px 0 3px; }
.dlg-title > span:nth-child(2) { margin: 2px 0 0 9px; font-size: 23px; }
.dialog .win-buttons button { border-color: #5f7795; background: linear-gradient(#c3d5ea 50%, #9ab4d2 50%, #b9d1ea); }
.dialog .win-buttons .red { border-color: #43101a; box-shadow: inset 0 0 0 2px #e0a59c; background: linear-gradient(#e5a397 50%, #bf3e24 50%, #cf6a52); }
.client { background: #f0f0f0; display: flow-root; }
.dlg-tabs { display: flex; align-items: flex-end; height: 41px; font-size: 21px; }
.dlg-tabs button { height: 38px; border: 2px solid #898c95; border-width: 2px 2px 0 0; padding: 0 10px; background: linear-gradient(#f2f2f2 50%, #dedede 50%, #cfcfcf); box-shadow: inset 0 0 0 2px #f8f8f8; }
.dlg-tabs .on { width: 102px; height: 43px; margin-bottom: -2px; padding: 0 0 6px 14px; border-left-width: 2px; background: #fff; box-shadow: none; position: relative; font-size: 22px; text-align: left; }
.page { margin-right: 4px; padding: 14px 22px 16px 26px; border: 2px solid #898c95; background: #fff; }

fieldset { margin: 0; padding: 0 0 0 14px; min-width: 0; border: 2px solid #d5dfe5; border-radius: 5px; }
legend { padding: 0; line-height: 28px; }
.config { height: 215px; }
.config-row { display: flex; gap: 32px; align-items: flex-start; padding: 2px 0 0 32px; }
.module { width: 281px; height: 105px; margin: 32px 9px 0 0; padding-top: 23px; }
.field { display: flex; flex-direction: column; gap: 10px; }
.config-row .field { margin-top: 33px; }
.mode { width: 305px; }
.rate { width: 162px; }
.obd { flex: 1; height: 151px; padding-top: 17px; display: flow-root; }
.obd .opt + .opt { margin-top: 30px; }
.opt { display: flex; align-items: center; gap: 8px; height: 28px; white-space: nowrap; }
.opt input {
  appearance: none;
  width: 24px;
  height: 24px;
  border: 2px solid #8e8f8f;
  border-radius: 50%;
  box-shadow: inset 0 0 0 2px #f2f2f2;
  background: radial-gradient(circle, #ececec, #cdd2d6);
}
.opt input:checked { background: radial-gradient(circle at 45% 45%, #57c7f0 0, #1b6fa0 3px, #10304c 6px, #d8dcdf 7px); }

.combo, .text { position: relative; display: block; }
.combo::after { content: ""; position: absolute; right: 10px; top: 17px; width: 16px; height: 9px; background: #000; clip-path: polygon(0 0, 100% 0, 50% 100%); }
.combo select { appearance: none; display: block; width: 100%; height: 42px; padding: 0 6px; border: 2px solid #707070; border-radius: 4px; font-size: 21px; background: linear-gradient(#f2f2f2 50%, #dedede 50%, #cfcfcf); box-shadow: inset 0 0 0 2px #f6f6f6; }
.combo.plain select { border-color: #abadb3 #dbe0e8 #e3e9ef; background: #fff; padding: 0 4px; }

.data { height: 333px; margin-top: 21px; }
.data-row { display: grid; grid-template-columns: 413px 408px 1fr; align-items: start; padding-left: 4px; }
.channels { height: 177px; margin-top: 54px; padding: 2px; border: 2px solid #828790; border-radius: 0; background: #fff; overflow: hidden; outline: 0; font-size: 21px; }
.channels option { height: 26px; min-height: 26px; line-height: 22px; padding: 0 0 4px 4px; }
.channels option:checked { background: linear-gradient(#39f, #39f); -webkit-text-fill-color: #fff; }
.transmit { margin: 25px 0 0 13px; width: 408px; }
.in-22 { padding-left: 22px; }
.tx { width: 194px; margin: 52px 0 0 35px; }
.canid-wrap { position: relative; margin: 34px 0 0 27px; }
.canid-wrap::after { content: ""; position: absolute; inset: -2px -11px -7px -7px; background: rgba(255, 56, 56, .49); }
.canid { height: 203px; }
.canid-row { display: flex; align-items: flex-start; gap: 25px; padding-left: 9px; }
.id { width: 146px; margin-top: 47px; }
.text input { display: block; width: 100%; height: 42px; padding: 0 4px; border: 2px solid #8ba0bd; border-top-color: #3d5a84; border-radius: 3px; outline: 0; background: #fff; }
.text::after { content: ""; position: absolute; left: 44px; top: 6px; width: 2px; height: 28px; background: #000; }
.format { width: 177px; height: 113px; margin-top: 20px; padding-top: 7px; }
.format .opt + .opt { margin-top: 10px; }

.dlg-foot { display: flex; justify-content: flex-end; gap: 16px; padding: 10px 14px 8px; border-top: 2px solid #fff; }
.dlg-foot button { width: 146px; height: 45px; border: 2px solid #707070; border-radius: 5px; box-shadow: inset 0 0 0 2px #f6f6f6; background: linear-gradient(#f2f2f2 50%, #dedede 50%, #cfcfcf); }

/* taskbar */
.taskbar {
  height: 80px;
  display: flex;
  align-items: stretch;
  border-top: 2px solid #3f4d63;
  box-shadow: inset 0 2px 0 #c4d5e8;
  background: linear-gradient(90deg, #8093aa 116px, #a5bedb 182px, #a5bedb calc(100% - 580px), #8093aa calc(100% - 496px));
}
.orb { width: 108px; margin-right: 8px; display: grid; place-items: center; }
.orb svg { width: 74px; height: 74px; }
.task { position: relative; width: 124px; display: grid; place-items: center; }
.chrome { border: 2px solid #8ea5c0; border-width: 0 2px; width: 120px; margin: 0 2px; background: radial-gradient(ellipse at 50% 100%, #d5e8ff 0, transparent 24%); }
.active { width: 118px; margin: 0 3px; border: 2px solid #5d6d84; border-radius: 4px; background: linear-gradient(120deg, #f0f5fa, #c3d3e6 60%, #dbe6f2); }
.tip {
  position: absolute;
  left: 50%;
  bottom: 79px;
  width: 227px;
  margin-left: -114px;
  border: 2px solid #767676;
  border-radius: 4px;
  line-height: 36px;
  font-size: 23px;
  color: #575757;
  white-space: nowrap;
  background: linear-gradient(#fff, #e4e5f0);
  box-shadow: 6px 6px 6px rgba(0, 0, 0, .5);
}
.tray { margin-left: auto; display: flex; align-items: center; gap: 15px; color: #fff; font-size: 21px; }
.lang { margin-right: 14px; margin-bottom: 10px; }
.caret { margin-right: 10px; }
.clock { width: 138px; margin-left: 2px; margin-bottom: 2px; display: grid; text-align: center; font-size: 21px; line-height: 34px; }
.desk { width: 29px; align-self: stretch; margin-left: -8px; border: 2px solid #4a586b; box-shadow: inset 0 0 0 2px #a3b2c4; background: linear-gradient(160deg, #8c9aab, #566577 50%, #74869c); }

/* machine status line */
.status { height: 42px; display: flex; align-items: center; gap: 12px; justify-content: flex-end; padding-right: 24px; border-radius: 0 0 12px 12px; border-top: 1px solid #8c8c8c; background: linear-gradient(#f7f7f7, #e2e2e2); }
.status svg { width: 30px; height: 30px; }
.status span { font-family: Inter, "DejaVu Sans", sans-serif; font-size: 25px; white-space: nowrap; margin-left: 2px; }
```
